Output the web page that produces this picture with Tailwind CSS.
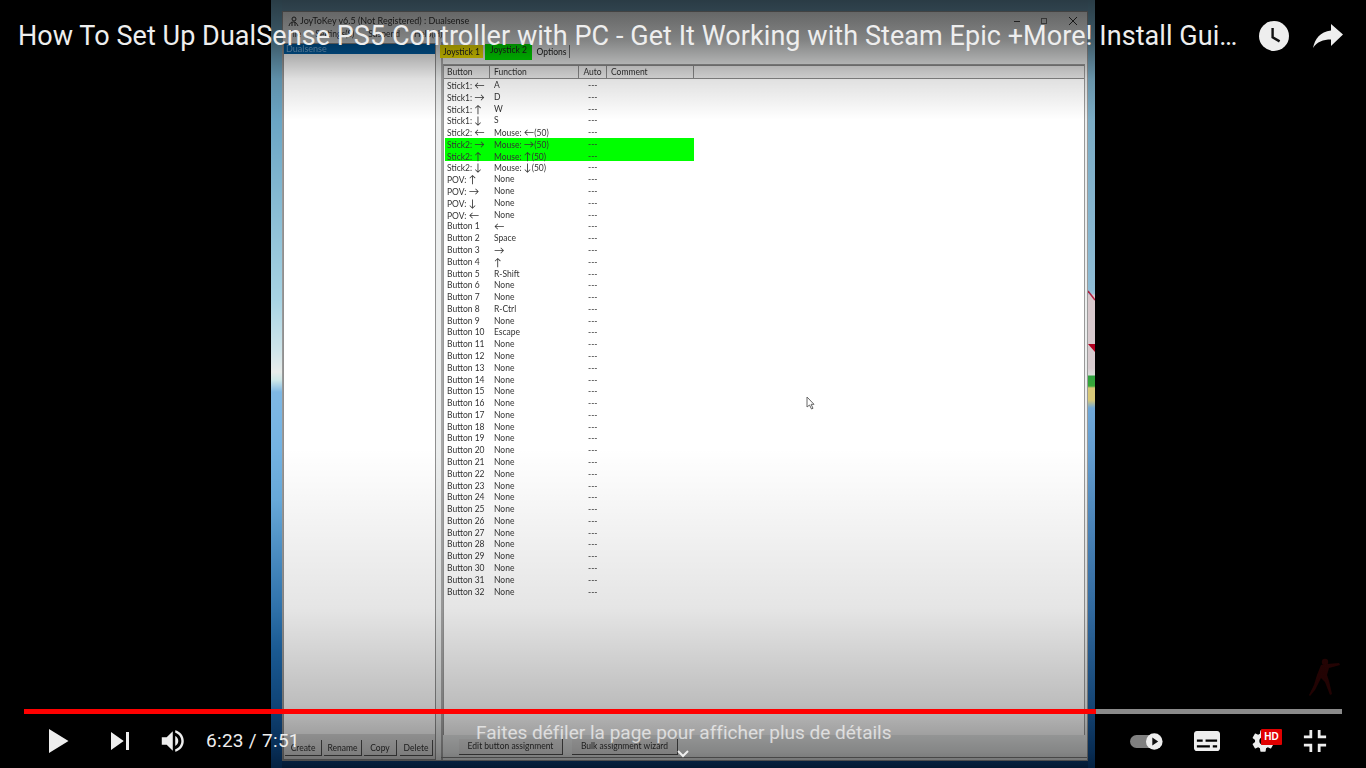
<!DOCTYPE html>
<html lang="en">
<head>
<meta charset="utf-8">
<title>JoyToKey video</title>
<script src="https://cdn.jsdelivr.net/npm/@tailwindcss/browser@4"></script>
</head>
<body class="bg-black">
<div class="relative h-[768px] w-[1366px] overflow-hidden bg-black font-['Roboto',sans-serif]">

  <!-- video frame -->
  <div class="ml-[271px] flex h-[768px] w-[824px] bg-[linear-gradient(to_bottom,#6f9cb5_0px,#6f9cb5_12px,#0f4a8c_755px,#08386f_768px)] blur-[0.35px] font-['Lato','DejaVu_Sans',sans-serif]">
    <!-- left wallpaper strip -->
    <div class="w-[11px] bg-[linear-gradient(to_bottom,#6d9fb8_0px,#6aa5c4_120px,#a8d4e4_300px,#cfe5ea_350px,#e8ecea_372px,#cfe8e8_380px,#7fb8e4_392px,#6aaee0_500px,#1f6cb0_650px,#0a4a90_768px)]"></div>

    <!-- application window -->
    <div class="mt-[11px] mb-[7px] flex w-[806px] flex-col border border-[#9a9a9a] bg-[#eceeee] text-[8.5px] leading-[11.79px] text-[#333333]">
      <!-- title bar -->
      <div class="flex h-[16px] shrink-0 items-center pl-[5px] pr-[10px] pt-[2px]">
        <svg class="h-[11px] w-[11px]" viewBox="0 0 11 11" fill="none" stroke="#333" stroke-width="1"><circle cx="6" cy="3" r="2"/><path d="M1 10c1-4 3-4 5-4s3 2 4 4M4 6v4M7 6v4"/></svg>
        <span class="ml-[1px] text-[9px]">JoyToKey v6.5 (Not Registered) : Dualsense</span>
        <span class="ml-auto w-[6px] border-t border-[#444]"></span>
        <span class="ml-[21px] h-[6px] w-[6px] border border-[#777]"></span>
        <svg class="ml-[22px] h-[8px] w-[8px]" viewBox="0 0 8 8" stroke="#333" stroke-width="1"><path d="M0 0l8 8M8 0L0 8"/></svg>
      </div>
      <!-- menu -->
      <div class="flex h-[14px] shrink-0 gap-[14px] pl-[5px] pt-[1px]">
        <span>File</span><span>Settings(S)</span><span>Suspend</span><span>Help(H)</span>
      </div>

      <div class="flex min-h-0 flex-1">
        <!-- profile list -->
        <div class="mt-[1px] flex w-[153px] shrink-0 flex-col border border-[#8f8f8f] bg-white">
          <div class="min-h-0 flex-1">
            <div class="h-[10px] bg-[#0060a8] pl-[2px] text-[9px] leading-[10px] text-[#7db4e0]">Dualsense</div>
          </div>
          <div class="flex h-[25px] shrink-0 items-start gap-[2px] bg-[#e2e2e2] pt-[6px] pl-[1px]">
            <span class="h-[16px] w-[37px] border-r border-b border-[#555] bg-[#e4e4e4] text-center leading-[16px]">Create</span>
            <span class="h-[16px] w-[38px] border-r border-b border-[#555] bg-[#e4e4e4] text-center leading-[16px]">Rename</span>
            <span class="h-[16px] w-[33px] border-r border-b border-[#555] bg-[#e4e4e4] text-center leading-[16px]">Copy</span>
            <span class="ml-[1px] h-[16px] w-[33px] border-r border-b border-[#555] bg-[#e4e4e4] text-center leading-[16px]">Delete</span>
          </div>
        </div>

        <!-- right pane -->
        <div class="ml-[5px] flex min-w-0 flex-1 flex-col border-l-2 border-[#a8a8a8]">
          <!-- tabs -->
          <div class="-ml-[3px] mt-[2px] flex h-[20px] shrink-0 items-start">
            <span class="mt-[1px] h-[13px] w-[43px] bg-[#f2e200] text-center leading-[14px] text-[#222222]">Joystick 1</span>
            <span class="ml-[2px] h-[16px] w-[47px] bg-[#00e600] text-center leading-[13px] text-[#222222]">Joystick 2</span>
            <span class="ml-[2px] mt-[1px] h-[13px] w-[36px] border-r border-[#777] text-center leading-[14px] text-[#222222]">Options</span>
          </div>
          <!-- list view -->
          <div class="mr-[2px] flex min-h-0 flex-1 flex-col border-x border-t border-[#999] bg-white">
            <div class="flex h-[14px] shrink-0 border-y border-[#8a8a8a] bg-[#eaeaea] leading-[12px]">
              <span class="w-[46px] border-r border-[#8a8a8a] pl-[3px]">Button</span>
              <span class="w-[89px] border-r border-[#8a8a8a] pl-[4px]">Function</span>
              <span class="w-[28px] border-r border-[#8a8a8a] text-center">Auto</span>
              <span class="w-[87px] border-r border-[#8a8a8a] pl-[4px]">Comment</span>
            </div>
            <div class="ml-[1px] grid w-[249px] grid-cols-[49px_94px_106px] auto-rows-[11.79px] leading-[13.8px] whitespace-nowrap">
              <span class="pl-[2px]">Stick1: <span class="text-[10.5px]">←</span></span><span>A</span><span>---</span>
              <span class="pl-[2px]">Stick1: <span class="text-[10.5px]">→</span></span><span>D</span><span>---</span>
              <span class="pl-[2px]">Stick1: <span class="text-[10.5px]">↑</span></span><span>W</span><span>---</span>
              <span class="pl-[2px]">Stick1: <span class="text-[10.5px]">↓</span></span><span>S</span><span>---</span>
              <span class="pl-[2px]">Stick2: <span class="text-[10.5px]">←</span></span><span>Mouse: <span class="text-[10.5px]">←</span>(50)</span><span>---</span>
              <span class="bg-[#00ff00] pl-[2px]">Stick2: <span class="text-[10.5px]">→</span></span><span class="bg-[#00ff00]">Mouse: <span class="text-[10.5px]">→</span>(50)</span><span class="bg-[#00ff00]">---</span>
              <span class="bg-[#00ff00] pl-[2px]">Stick2: <span class="text-[10.5px]">↑</span></span><span class="bg-[#00ff00]">Mouse: <span class="text-[10.5px]">↑</span>(50)</span><span class="bg-[#00ff00]">---</span>
              <span class="pl-[2px]">Stick2: <span class="text-[10.5px]">↓</span></span><span>Mouse: <span class="text-[10.5px]">↓</span>(50)</span><span>---</span>
              <span class="pl-[2px]">POV: <span class="text-[10.5px]">↑</span></span><span>None</span><span>---</span>
              <span class="pl-[2px]">POV: <span class="text-[10.5px]">→</span></span><span>None</span><span>---</span>
              <span class="pl-[2px]">POV: <span class="text-[10.5px]">↓</span></span><span>None</span><span>---</span>
              <span class="pl-[2px]">POV: <span class="text-[10.5px]">←</span></span><span>None</span><span>---</span>
              <span class="pl-[2px]">Button 1</span><span class="text-[10.5px]">←</span><span>---</span>
              <span class="pl-[2px]">Button 2</span><span>Space</span><span>---</span>
              <span class="pl-[2px]">Button 3</span><span class="text-[10.5px]">→</span><span>---</span>
              <span class="pl-[2px]">Button 4</span><span class="text-[10.5px]">↑</span><span>---</span>
              <span class="pl-[2px]">Button 5</span><span>R-Shift</span><span>---</span>
              <span class="pl-[2px]">Button 6</span><span>None</span><span>---</span>
              <span class="pl-[2px]">Button 7</span><span>None</span><span>---</span>
              <span class="pl-[2px]">Button 8</span><span>R-Ctrl</span><span>---</span>
              <span class="pl-[2px]">Button 9</span><span>None</span><span>---</span>
              <span class="pl-[2px]">Button 10</span><span>Escape</span><span>---</span>
              <span class="pl-[2px]">Button 11</span><span>None</span><span>---</span>
              <span class="pl-[2px]">Button 12</span><span>None</span><span>---</span>
              <span class="pl-[2px]">Button 13</span><span>None</span><span>---</span>
              <span class="pl-[2px]">Button 14</span><span>None</span><span>---</span>
              <span class="pl-[2px]">Button 15</span><span>None</span><span>---</span>
              <span class="pl-[2px]">Button 16</span><span>None</span><span>---</span>
              <span class="pl-[2px]">Button 17</span><span>None</span><span>---</span>
              <span class="pl-[2px]">Button 18</span><span>None</span><span>---</span>
              <span class="pl-[2px]">Button 19</span><span>None</span><span>---</span>
              <span class="pl-[2px]">Button 20</span><span>None</span><span>---</span>
              <span class="pl-[2px]">Button 21</span><span>None</span><span>---</span>
              <span class="pl-[2px]">Button 22</span><span>None</span><span>---</span>
              <span class="pl-[2px]">Button 23</span><span>None</span><span>---</span>
              <span class="pl-[2px]">Button 24</span><span>None</span><span>---</span>
              <span class="pl-[2px]">Button 25</span><span>None</span><span>---</span>
              <span class="pl-[2px]">Button 26</span><span>None</span><span>---</span>
              <span class="pl-[2px]">Button 27</span><span>None</span><span>---</span>
              <span class="pl-[2px]">Button 28</span><span>None</span><span>---</span>
              <span class="pl-[2px]">Button 29</span><span>None</span><span>---</span>
              <span class="pl-[2px]">Button 30</span><span>None</span><span>---</span>
              <span class="pl-[2px]">Button 31</span><span>None</span><span>---</span>
              <span class="pl-[2px]">Button 32</span><span>None</span><span>---</span>
            </div>
          </div>
          <div class="-ml-[2px] mb-[2px] flex h-[23px] shrink-0 items-start border-b border-[#888] pl-[18px] pt-[4px]">
            <span class="h-[16px] w-[104px] border-r border-b border-[#555] bg-[#e4e4e4] text-center leading-[15px]">Edit button assignment</span>
            <span class="ml-[9px] h-[16px] w-[106px] border-r border-b border-[#555] bg-[#e4e4e4] text-center leading-[15px]">Bulk assignment wizard</span>
          </div>
        </div>
      </div>
    </div>

    <!-- right wallpaper strip -->
    <div class="relative w-[7px] bg-[linear-gradient(to_bottom,#6d9fb8_0px,#8fbdd6_290px,#9cc4da_294px,#d8c8cc_295px,#d8ccd0_368px,#dcdcdc_375px,#2fa03f_376px,#38a838_386px,#d8c878_388px,#d8c878_400px,#70a8d8_408px,#1e5f9f_700px,#0a4a90_768px)]">
      <svg class="absolute left-0 top-[288px] h-[80px] w-[7px]" viewBox="0 0 7 80"><path d="M0 3l7 9" stroke="#b02040" stroke-width="1.5"/><path d="M0 56h7v8z" fill="#b00020"/></svg>
    </div>
  </div>

  <!-- mouse pointer inside the video -->
  <svg class="absolute left-[806px] top-[396px] h-[14px] w-[10px]" viewBox="0 0 10 14" fill="#fff" stroke="#666" stroke-width="1"><path d="M1 1v10l2.5-2 2 4 1.5-.7-1.9-4H8z"/></svg>

  <!-- faint runner logo in the corner -->
  <svg class="absolute left-[1305px] top-[657px] h-[42px] w-[36px]" viewBox="0 0 36 42" fill="#2c0404"><circle cx="20" cy="5" r="3.2"/><path d="M16 8l6-1 12-1 1 2-11 3-2 7 2 6 3 13-2 1-5-13-4-4-6 12-5 6-1-1 5-10 3-10z"/></svg>

  <!-- dimming gradients of the player -->
  <div class="pointer-events-none absolute inset-x-0 top-0 h-[120px] bg-[linear-gradient(to_bottom,rgba(0,0,0,0.62)_0%,rgba(0,0,0,0.45)_33%,rgba(0,0,0,0.12)_66%,rgba(0,0,0,0)_100%)]"></div>
  <div class="pointer-events-none absolute inset-x-0 bottom-0 h-[320px] bg-[linear-gradient(to_bottom,rgba(0,0,0,0)_0%,rgba(0,0,0,0.1)_50%,rgba(0,0,0,0.26)_80%,rgba(0,0,0,0.44)_95%,rgba(0,0,0,0.55)_100%)]"></div>

  <!-- top bar -->
  <div class="absolute inset-x-0 top-0 flex h-[71px] items-center pl-[18px] text-[#eeeeee]">
    <div class="w-[1228px] truncate pt-[1px] text-[27px] leading-[71px] tracking-[0.06px]">How To Set Up DualSense PS5 Controller with PC - Get It Working with Steam Epic +More! Install Guide Tutorial</div>
    <svg class="ml-[13px] h-[30px] w-[30px]" viewBox="0 0 30 30"><circle cx="15" cy="15" r="15" fill="#eeeeee"/><path d="M13.6 7v9.2l7 4.2" fill="none" stroke="#111" stroke-width="2.4"/></svg>
    <svg class="ml-[24px] h-[24px] w-[30px]" viewBox="0 0 30 24" fill="#eeeeee"><path d="M18 0v6.6C7 8 2 15 0 24c4-6 10-8.4 18-8.4V22L30 10.6z"/></svg>
  </div>

  <!-- scroll hint -->
  <div class="absolute left-[476px] top-[722px] text-[19px] leading-[22px] tracking-[0.01px] text-white/65">Faites défiler la page pour afficher plus de détails</div>
  <svg class="absolute left-[677px] top-[750px] h-[8px] w-[12px]" viewBox="0 0 12 8" fill="none" stroke="#eeeeee" stroke-width="2"><path d="M1 1l5 5 5-5"/></svg>

  <!-- player controls -->
  <div class="absolute inset-x-0 bottom-0 text-[#eeeeee]">
    <div class="ml-[24px] flex h-[5px] w-[1318px] bg-[#8a8a8a]">
      <div class="w-[1072px] bg-[#ff0000]"></div>
    </div>
    <div class="flex h-[54px] items-center">
      <svg class="ml-[31px] h-[54px] w-[54px]" viewBox="0 0 36 36" fill="#eeeeee"><path d="M12 26l6.500-4v-8L12 10zM18.500 22l6.500-4-6.500-4z"/></svg>
      <svg class="ml-[8px] h-[54px] w-[54px]" viewBox="0 0 36 36" fill="#eeeeee"><path d="M12 24l8.500-6L12 12zM22 12v12h2V12z"/></svg>
      <svg class="ml-[5px] h-[44px] w-[44px]" viewBox="0 0 36 36" fill="#eeeeee"><path d="M8 21h4l5 5V10l-5 5H8zM19 14v8c1.480-.68 2.500-2.230 2.500-4 0-1.740-1.020-3.260-2.500-4zM19 11.290c2.890.86 5 3.540 5 6.710s-2.110 5.850-5 6.710v2.060c4.010-.91 7-4.490 7-8.770s-2.990-7.860-7-8.770z"/></svg>
      <span class="ml-[10px] text-[19px] leading-[54px] tracking-[0.3px] whitespace-nowrap">6:23 / 7:51</span>

      <div class="ml-auto flex h-[17px] w-[33px] items-center">
        <div class="h-[13px] w-[24px] rounded-l-full bg-[#808080]"></div>
        <svg class="-ml-[7px] h-[17px] w-[17px]" viewBox="0 0 17 17"><circle cx="8.500" cy="8.500" r="8.500" fill="#eeeeee"/><path d="M6.500 4.500v8l6-4z" fill="#111"/></svg>
      </div>
      <svg class="ml-[18px] h-[52px] w-[52px]" viewBox="0 0 36 36" fill="#eeeeee" fill-rule="evenodd"><path d="M11 11c-1.100 0-2 .9-2 2v10c0 1.100.9 2 2 2h14c1.100 0 2-.9 2-2V13c0-1.100-.9-2-2-2zM11 17h4v1.500h-4zM17 17h8v1.500h-8zM11 21h9v1.500h-9zM22 21h3v1.500h-3z"/></svg>
      <div class="relative ml-[6px] h-[48px] w-[48px]">
        <svg class="h-[48px] w-[48px]" viewBox="0 0 36 36" fill="#eeeeee"><path d="m23.940 18.780c.03-.25.05-.51.05-.78 0-.27-.02-.52-.05-.78l1.680-1.320c.15-.12.19-.33.09-.51l-1.600-2.760c-.09-.17-.31-.24-.48-.17l-1.990.8c-.41-.32-.86-.58-1.350-.78l-.30-2.120c-.02-.19-.19-.33-.39-.33h-3.200c-.2 0-.36.14-.39.33l-.30 2.120c-.48.2-.93.47-1.350.78l-1.990-.8c-.18-.07-.39 0-.48.17l-1.600 2.760c-.10.17-.05.39.09.51l1.680 1.320c-.03.25-.05.52-.05.78 0 .26.02.52.05.78l-1.680 1.320c-.15.12-.19.33-.09.51l1.600 2.760c.09.17.31.24.48.17l1.990-.8c.41.32.86.58 1.350.78l.30 2.120c.02.19.19.33.39.33h3.200c.2 0 .36-.14.39-.33l.30-2.120c.48-.2.93-.47 1.350-.78l1.990.8c.18.07.39 0 .48-.17l1.600-2.760c.09-.17.05-.39-.09-.51zm-5.940 2.010c-1.540 0-2.800-1.250-2.800-2.800 0-1.540 1.250-2.800 2.800-2.800 1.540 0 2.800 1.250 2.800 2.800 0 1.540-1.250 2.800-2.800 2.800z"/></svg>
        <span class="absolute left-[22px] top-[12px] h-[16px] w-[21px] rounded-[1px] bg-[#e00000] text-center font-['Liberation_Sans',sans-serif] text-[10px] font-bold leading-[16px] text-white">HD</span>
      </div>
      <svg class="ml-[3px] mr-[26px] h-[50px] w-[50px]" viewBox="0 0 36 36" fill="#eeeeee"><path d="M14 14h-4v2h6v-6h-2zM22 14v-4h-2v6h6v-2zM20 26h2v-4h4v-2h-6zM10 22h4v4h2v-6h-6z"/></svg>
    </div>
  </div>
</div>
</body>
</html>
